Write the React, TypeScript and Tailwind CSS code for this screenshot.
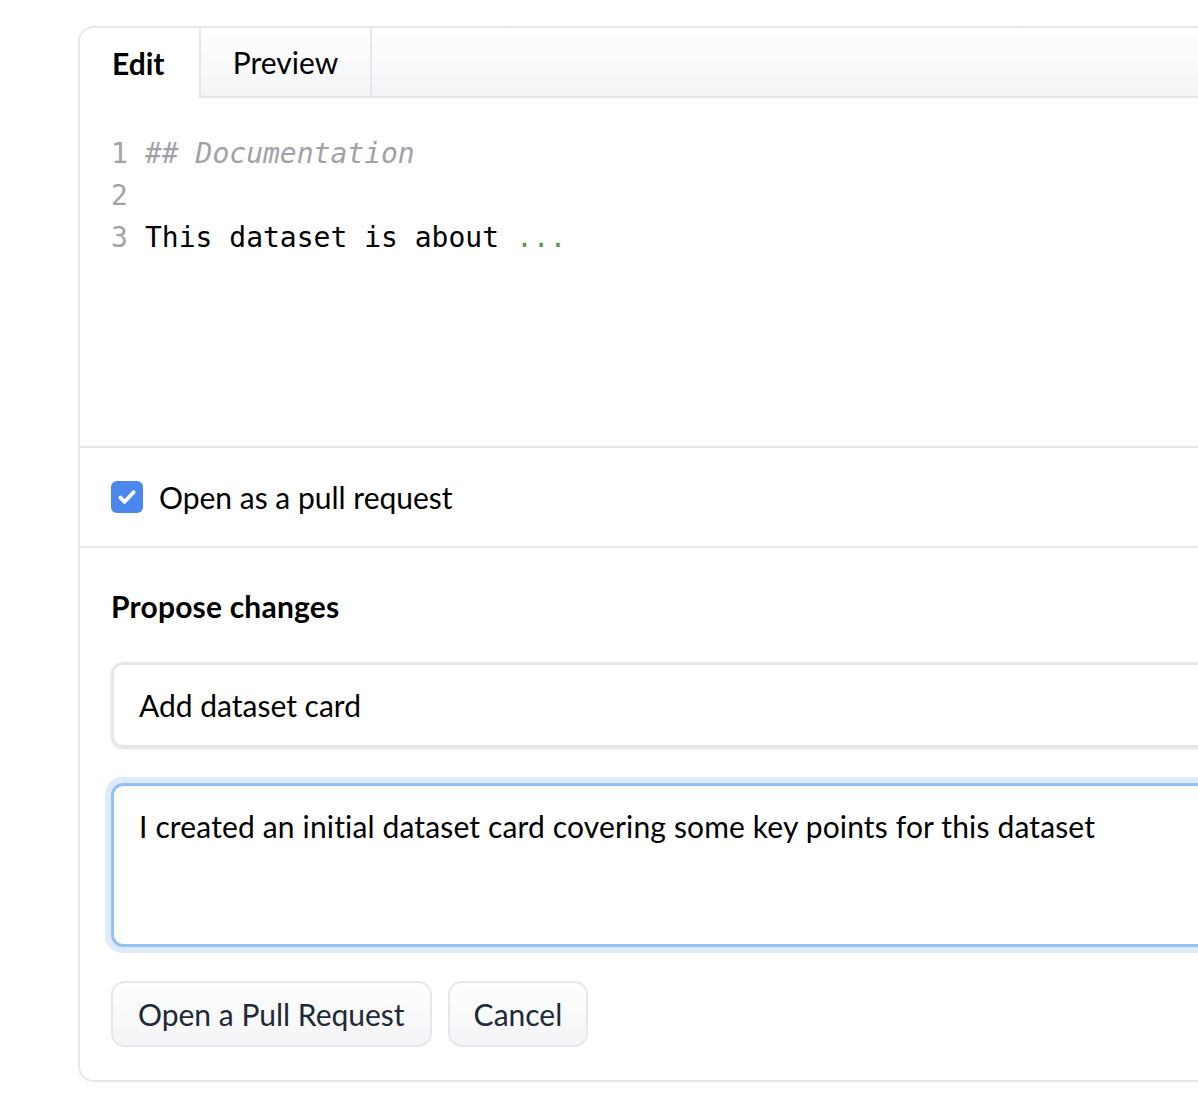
import React, { useState } from "react";

const sans = "font-['Lato','Noto_Sans',sans-serif]";
const mono = "font-['DejaVu_Sans_Mono','Liberation_Mono',monospace]";

function CodeLine({ n, children }: { n: number; children?: React.ReactNode }) {
  return (
    <div className="flex h-[42px] items-center">
      <span className="w-[34px] text-[#a3a3a3]">{n}</span>
      <span>{children}</span>
    </div>
  );
}

export default function App() {
  const [tab, setTab] = useState<"edit" | "preview">("edit");
  const [asPr, setAsPr] = useState(true);

  return (
    <div className={`min-h-[1114px] overflow-hidden bg-white pt-[26px] pl-[78px] ${sans}`}>
      <div className="w-[1180px] overflow-hidden rounded-[16px] border-2 border-[#e5e7eb] text-black">
        {/* Tabs */}
        <div className="flex h-[70px] bg-gradient-to-b from-white to-[#f3f4f6]">
          <button
            onClick={() => setTab("edit")}
            className="flex w-[119px] items-center pl-[32px] text-[30px] font-bold bg-white"
          >
            Edit
          </button>
          <button
            onClick={() => setTab("preview")}
            className="flex w-[173px] items-center justify-center border-x-2 border-b-2 border-[#e5e7eb] text-[30px]"
          >
            Preview
          </button>
          <div className="flex-1 border-b-2 border-[#e5e7eb]" />
        </div>

        {/* Editor */}
        <div className={`h-[348px] px-[31px] pt-[35px] text-[28px] ${mono}`}>
          <CodeLine n={1}>
            <span className="italic text-[#a1a1aa]">## Documentation</span>
          </CodeLine>
          <CodeLine n={2} />
          <CodeLine n={3}>
            This dataset is about <span className="text-[#5b9a4e]">...</span>
          </CodeLine>
        </div>

        {/* Checkbox row */}
        <label className="flex h-[102px] items-center gap-[16px] border-y-2 border-[#e5e7eb] px-[31px] text-[30px]">
          <span
            onClick={() => setAsPr(!asPr)}
            className={`flex h-[32px] w-[32px] items-center justify-center rounded-[6px] ${
              asPr ? "bg-[#4b87ed]" : "border-2 border-gray-300 bg-white"
            }`}
          >
            {asPr && (
              <svg width="24" height="24" viewBox="0 0 20 20" fill="none">
                <path
                  d="M4.5 10.5l3.5 3.5 7.5-8"
                  stroke="white"
                  strokeWidth="3.2"
                  strokeLinecap="round"
                  strokeLinejoin="round"
                />
              </svg>
            )}
          </span>
          Open as a pull request
        </label>

        {/* Propose changes */}
        <div className="px-[31px] pt-[39px] pb-[33px]">
          <h3 className="text-[30px] font-bold leading-[38px] tracking-[0.2px]">Propose changes</h3>
          <div className="mt-[37px] flex h-[86px] items-center rounded-[12px] border-[3px] border-[#e5e7eb] px-[25px] text-[30px] shadow-sm">
            Add dataset card
          </div>
          <div className="mt-[35px] h-[164px] rounded-[12px] border-[3px] border-[#93c0f3] px-[25px] pt-[18px] text-[30px] tracking-[0.15px] ring-[6px] ring-[#dfeafc]">
            I created an initial dataset card covering some key points for this dataset
          </div>
          <div className="mt-[34px] flex gap-[16px]">
            <button className="h-[66px] rounded-[14px] border-2 border-[#e5e7eb] bg-gradient-to-b from-white to-[#f3f4f6] px-[25px] text-[30px] text-[#1f2937]">
              Open a Pull Request
            </button>
            <button className="h-[66px] rounded-[14px] border-2 border-[#e5e7eb] bg-gradient-to-b from-white to-[#f3f4f6] px-[24px] text-[30px] text-[#1f2937]">
              Cancel
            </button>
          </div>
        </div>
      </div>
    </div>
  );
}
